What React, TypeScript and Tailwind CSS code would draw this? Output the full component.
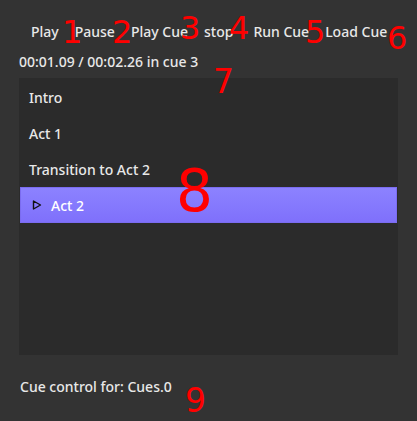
const buttons = [
  { label: "Play", extra: "" },
  { label: "Pause", extra: "" },
  { label: "Play Cue", extra: "" },
  { label: "stop", extra: "" },
  { label: "Run Cue", extra: "ml-[4px]" },
  { label: "Load Cue", extra: "" },
];

const cues = ["Intro", "Act 1", "Transition to Act 2", "Act 2"];
const current = 3;

// red annotation numbers laid over the screenshot
const marks = [
  { n: "1", cls: "left-[62px] top-[16px] text-[32px]" },
  { n: "2", cls: "left-[112px] top-[16px] text-[32px]" },
  { n: "3", cls: "left-[180px] top-[12px] text-[32px]" },
  { n: "4", cls: "left-[229px] top-[12px] text-[32px]" },
  { n: "5", cls: "left-[305px] top-[16px] text-[32px]" },
  { n: "6", cls: "left-[387px] top-[22px] text-[32px]" },
  { n: "7", cls: "left-[213px] top-[65px] text-[33px]" },
  { n: "8", cls: "left-[176px] top-[162px] text-[58px]" },
  { n: "9", cls: "left-[185px] top-[384px] text-[33px]" },
];

export default function App() {
  return (
    <div className="relative h-[421px] w-[417px] overflow-hidden bg-[#333333] font-['Noto_Sans',sans-serif] text-[14px] font-medium text-[#e8e8e8]">
      <div className="flex pl-[23px] pt-[21px]">
        {buttons.map((b) => (
          <button key={b.label} className={`px-2 leading-[22px] ${b.extra}`}>
            {b.label}
          </button>
        ))}
      </div>
      <div className="mt-[9px] pl-[19px] leading-[20px]">00:01.09 / 00:02.26 in cue 3</div>
      <div className="mx-[19px] mt-[6px] h-[277px] bg-[#2b2b2b] pt-[1px]">
        {cues.map((c, i) =>
          i === current ? (
            <div
              key={c}
              className="mx-px flex h-[36px] items-center border border-[#7b6cf0] bg-gradient-to-b from-[#8c82ff] to-[#7f70fb] pl-[10px]"
            >
              <svg width="12" height="12" viewBox="0 0 12 12" className="mr-[8px]">
                <path d="M2.5 2 L9.5 6 L2.5 10 Z" fill="none" stroke="#111" strokeWidth="1.4" strokeLinejoin="round" />
              </svg>
              <span className="text-white">{c}</span>
            </div>
          ) : (
            <div key={c} className="flex h-[36px] items-center pl-[10px]">
              {c}
            </div>
          )
        )}
      </div>
      <div className="mt-[22px] pl-[20px] leading-[20px]">Cue control for: Cues.0</div>
      {marks.map((m) => (
        <span
          key={m.n}
          className={`absolute leading-none text-[#ff0000] font-['DejaVu_Sans',sans-serif] font-normal ${m.cls}`}
        >
          {m.n}
        </span>
      ))}
    </div>
  );
}
